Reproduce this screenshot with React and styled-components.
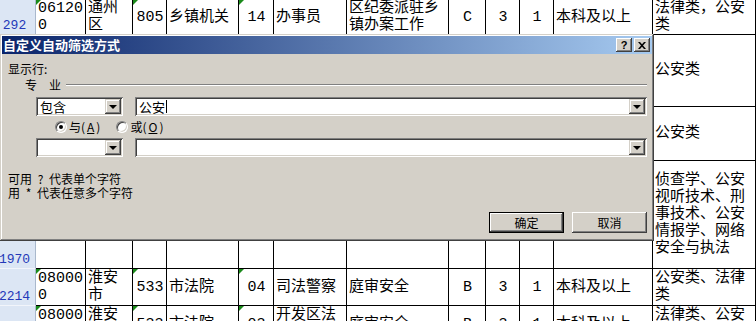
import React from 'react';
import styled, { createGlobalStyle } from 'styled-components';

const GlobalStyle = createGlobalStyle`
  html, body {
    margin: 0;
    padding: 0;
    background: #fff;
  }
  body {
    width: 756px;
    height: 321px;
    overflow: hidden;
  }
`;

const COLS = '36px 50px 47px 34px 72px 35px 73px 102px 37px 34px 34px 99px 1fr';

const ROWS = [
  {
    h: 35,
    num: '292',
    cells: [
      { t: ['06120', '0'], flag: true },
      { t: ['通州', '区'] },
      { t: '805', c: true, flag: true },
      { t: '乡镇机关' },
      { t: '14', c: true, flag: true },
      { t: '办事员' },
      { t: ['区纪委派驻乡', '镇办案工作'] },
      { t: 'C', c: true },
      { t: '3', c: true },
      { t: '1', c: true },
      { t: '本科及以上' },
      { t: ['法律类，公安', '类'] },
    ],
  },
  { h: 72, num: '1025', cells: [...Array(11).fill({ t: '' }), { t: '公安类' }] },
  { h: 54, num: '1447', cells: [...Array(11).fill({ t: '' }), { t: '公安类' }] },
  {
    h: 108,
    num: '1970',
    cells: [
      ...Array(11).fill({ t: '' }),
      { t: ['侦查学、公安', '视听技术、刑', '事技术、公安', '情报学、网络', '安全与执法'] },
    ],
  },
  {
    h: 37,
    num: '2214',
    cells: [
      { t: ['08000', '0'], flag: true },
      { t: ['淮安', '市'] },
      { t: '533', c: true, flag: true },
      { t: '市法院' },
      { t: '04', c: true, flag: true },
      { t: '司法警察' },
      { t: '庭审安全' },
      { t: 'B', c: true },
      { t: '3', c: true },
      { t: '1', c: true },
      { t: '本科及以上' },
      { t: ['公安类、法律', '类'] },
    ],
  },
  {
    h: 37,
    num: '2215',
    cells: [
      { t: ['08000', '0'], flag: true },
      { t: ['淮安', '市'] },
      { t: '533', c: true, flag: true },
      { t: '市法院' },
      { t: '03', c: true, flag: true },
      { t: ['开发区法', '院'] },
      { t: '庭审安全' },
      { t: 'B', c: true },
      { t: '3', c: true },
      { t: '1', c: true },
      { t: '本科及以上' },
      { t: ['法律类、公安', '类'] },
    ],
  },
];

const Page = styled.div`
  position: relative;
  width: 756px;
  height: 321px;
  overflow: hidden;
`;

const Sheet = styled.div`
  display: flex;
  flex-direction: column;
`;

const Row = styled.div`
  display: grid;
  grid-template-columns: ${COLS};
  height: ${(p) => p.$h}px;
`;

const RowHeader = styled.div`
  background: #dce6f4;
  border-right: 1px solid #a9b8cc;
  border-bottom: 1px solid #f2f5fb;
  box-sizing: border-box;
  display: flex;
  align-items: flex-end;
  justify-content: center;
  padding: 0 6px 1px 0;
  color: #2438b8;
  font: 13px/14px "Liberation Mono", monospace;
`;

const Cell = styled.div`
  position: relative;
  box-sizing: border-box;
  border-right: 1px solid #000;
  border-bottom: 1px solid #000;
  display: flex;
  flex-direction: column;
  justify-content: center;
  align-items: ${(p) => (p.$center ? 'center' : 'flex-start')};
  padding: 0 1px 0 2px;
  overflow: hidden;
  white-space: nowrap;
  color: #000;
  font: 15px/17px "Liberation Mono", "Noto Sans CJK SC", monospace;

  &::before {
    content: '';
    display: ${(p) => (p.$flag ? 'block' : 'none')};
    position: absolute;
    left: 0;
    top: 0;
    border-top: 5px solid #1a8a1a;
    border-right: 5px solid transparent;
  }
`;

/* ---------- dialog ---------- */

const Dialog = styled.div`
  position: absolute;
  left: 0;
  top: 34px;
  width: 654px;
  height: 207px;
  box-sizing: border-box;
  padding: 2px;
  background: #d4d0c8;
  box-shadow: inset -1px -1px #404040, inset 1px 1px #d4d0c8,
    inset -2px -2px #808080, inset 2px 2px #fff;
  display: flex;
  flex-direction: column;
  font: 12px/14px "Noto Sans CJK SC", sans-serif;
  color: #000;
`;

const TitleBar = styled.div`
  height: 18px;
  display: flex;
  align-items: center;
  padding: 0 2px 0 1px;
  background: linear-gradient(to right, #0a246a, #a6caf0);
  color: #fff;
  font: bold 13px/18px "Noto Sans CJK SC", sans-serif;
`;

const TitleText = styled.span`
  flex: 1;
`;

const CaptionButton = styled.div`
  width: 16px;
  height: 14px;
  box-sizing: border-box;
  background: #d4d0c8;
  box-shadow: inset -1px -1px #404040, inset 1px 1px #fff,
    inset -2px -2px #808080, inset 2px 2px #d4d0c8;
  display: flex;
  align-items: center;
  justify-content: center;
  color: #000;
  font: bold 11px/12px "Liberation Sans", sans-serif;
  margin-left: ${(p) => (p.$gap ? '2px' : '0')};
`;

const Body = styled.div`
  display: flex;
  flex-direction: column;
  padding: 0 5px 0 6px;
`;

const Caption = styled.div`
  margin-top: 8px;
  height: 14px;
`;

const Legend = styled.div`
  margin-top: 2px;
  padding-left: 17px;
  height: 14px;
  display: flex;
  align-items: center;
`;

const Etched = styled.div`
  flex: 1;
  margin-left: 5px;
  border-top: 1px solid #808080;
  border-bottom: 1px solid #fff;
`;

const CriteriaRow = styled.div`
  margin-top: ${(p) => p.$mt}px;
  margin-left: 28px;
  display: flex;
  gap: 12px;
  height: 19px;
`;

const Combo = styled.div`
  position: relative;
  width: ${(p) => (p.$grow ? 'auto' : '87px')};
  flex: ${(p) => (p.$grow ? 1 : 'none')};
  box-sizing: border-box;
  background: #fff;
  box-shadow: inset 1px 1px #808080, inset -1px -1px #fff,
    inset 2px 2px #404040, inset -2px -2px #d4d0c8;
  display: flex;
  align-items: center;
  padding: 0 18px 0 4px;
  font: 13px/15px "Noto Sans CJK SC", sans-serif;
`;

const Caret = styled.span`
  display: inline-block;
  width: 0;
  height: 13px;
  border-left: 1px solid #000;
  margin-left: 1px;
`;

const DropButton = styled.div`
  position: absolute;
  top: 2px;
  right: 2px;
  bottom: 2px;
  width: 16px;
  background: #d4d0c8;
  box-shadow: inset -1px -1px #404040, inset 1px 1px #d4d0c8,
    inset -2px -2px #808080, inset 2px 2px #fff;
  display: flex;
  align-items: center;
  justify-content: center;

  &::after {
    content: '';
    border-top: 4px solid #000;
    border-left: 4px solid transparent;
    border-right: 4px solid transparent;
    margin-top: 1px;
  }
`;

const RadioRow = styled.div`
  margin-top: 4px;
  padding-left: 47px;
  height: 13px;
  display: flex;
  align-items: center;
  gap: 16px;
`;

const RadioLabel = styled.label`
  display: flex;
  align-items: center;
  gap: 2px;
`;

const RadioDot = styled.span`
  width: 12px;
  height: 12px;
  box-sizing: border-box;
  border-radius: 50%;
  background: #fff;
  border: 1px solid;
  border-color: #808080 #fff #fff #808080;
  box-shadow: inset 1px 1px #404040, inset -1px -1px #d4d0c8;
  display: flex;
  align-items: center;
  justify-content: center;

  &::after {
    content: '';
    display: ${(p) => (p.$checked ? 'block' : 'none')};
    width: 4px;
    height: 4px;
    border-radius: 50%;
    background: #000;
  }
`;

const Hints = styled.div`
  margin-top: 15px;
  line-height: 14px;
  white-space: pre;
  word-spacing: 3px;
`;

const ButtonRow = styled.div`
  margin-top: 12px;
  display: flex;
  justify-content: flex-end;
  gap: 8px;
`;

const PushButton = styled.div`
  width: 75px;
  height: 21px;
  box-sizing: border-box;
  background: #d4d0c8;
  border: ${(p) => (p.$default ? '1px solid #000' : 'none')};
  box-shadow: inset -1px -1px #404040, inset 1px 1px #fff,
    inset -2px -2px #808080, inset 2px 2px #d4d0c8;
  display: flex;
  align-items: center;
  justify-content: center;
`;

const CloseGlyph = () => (
  <svg width="8" height="7" viewBox="0 0 8 7">
    <path d="M0 0h2l2 2.2L6 0h2L5 3.5 8 7H6L4 4.8 2 7H0l3-3.5z" fill="#000" />
  </svg>
);

const App = () => (
  <Page>
    <GlobalStyle />
    <Sheet>
      {ROWS.map((row, i) => (
        <Row key={i} $h={row.h}>
          <RowHeader>{row.num}</RowHeader>
          {row.cells.map((cell, j) => (
            <Cell key={j} $center={cell.c} $flag={cell.flag}>
              {(Array.isArray(cell.t) ? cell.t : [cell.t]).map((line, k) => (
                <span key={k}>{line}</span>
              ))}
            </Cell>
          ))}
        </Row>
      ))}
    </Sheet>

    <Dialog>
      <TitleBar>
        <TitleText>自定义自动筛选方式</TitleText>
        <CaptionButton>?</CaptionButton>
        <CaptionButton $gap>
          <CloseGlyph />
        </CaptionButton>
      </TitleBar>
      <Body>
        <Caption>显示行:</Caption>
        <Legend>
          专　业
          <Etched />
        </Legend>
        <CriteriaRow $mt={5}>
          <Combo>
            包含
            <DropButton />
          </Combo>
          <Combo $grow>
            公安
            <Caret />
            <DropButton />
          </Combo>
        </CriteriaRow>
        <RadioRow>
          <RadioLabel>
            <RadioDot $checked />
            与(<u>A</u>)
          </RadioLabel>
          <RadioLabel>
            <RadioDot />
            或(<u>O</u>)
          </RadioLabel>
        </RadioRow>
        <CriteriaRow $mt={5}>
          <Combo>
            <DropButton />
          </Combo>
          <Combo $grow>
            <DropButton />
          </Combo>
        </CriteriaRow>
        <Hints>
          <div>可用 ? 代表单个字符</div>
          <div>用 * 代表任意多个字符</div>
        </Hints>
        <ButtonRow>
          <PushButton $default>确定</PushButton>
          <PushButton>取消</PushButton>
        </ButtonRow>
      </Body>
    </Dialog>
  </Page>
);

export default App;
